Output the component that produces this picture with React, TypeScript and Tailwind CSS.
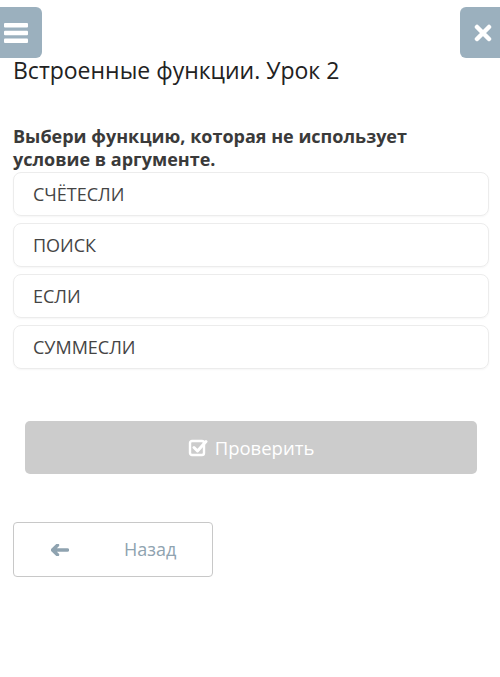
import React from "react";

export default function App() {
  const options = ["СЧЁТЕСЛИ", "ПОИСК", "ЕСЛИ", "СУММЕСЛИ"];
  return (
    <div
      className="w-[500px] h-[677px] bg-white relative overflow-hidden text-[#333]"
      style={{ fontFamily: '"Open Sans", "Noto Sans", sans-serif' }}
    >
      <div className="flex justify-between pt-[7px]">
        <div className="w-[42px] h-[51px] bg-[#9bb0be] rounded-r-[6px] flex items-center pl-[4px]">
          <svg width="24" height="20" viewBox="0 0 24 20">
            <rect x="0" y="0" width="24" height="4.5" rx="1" fill="#fff" />
            <rect x="0" y="7.75" width="24" height="4.5" rx="1" fill="#fff" />
            <rect x="0" y="15.5" width="24" height="4.5" rx="1" fill="#fff" />
          </svg>
        </div>
        <div className="w-[40px] h-[51px] bg-[#9bb0be] rounded-l-[6px] flex items-center justify-center pl-[6px]">
          <svg width="18" height="18" viewBox="0 0 18 18">
            <path d="M3 3 L15 15 M15 3 L3 15" stroke="#fff" strokeWidth="4.5" strokeLinecap="round" />
          </svg>
        </div>
      </div>
      <div className="px-[13px]">
        <div className="text-[23px] leading-[30px] text-[#222] mt-[-3px]">Встроенные функции. Урок 2</div>
        <div className="mt-[40px] text-[18px] leading-[23px] font-bold text-[#3a3a3a]">
          Выбери функцию, которая не использует
          <br />
          условие в аргументе.
        </div>
        <div className="mt-[1px] flex flex-col gap-[7px] w-[476px]">
          {options.map((o) => (
            <div
              key={o}
              className="h-[44px] border border-[#ececec] rounded-[8px] flex items-center pl-[19px] text-[18px] text-[#444] shadow-[0_1px_2px_rgba(0,0,0,0.04)]"
            >
              {o}
            </div>
          ))}
        </div>
        <div className="mt-[52px] ml-[12px] w-[452px] h-[53px] bg-[#cccccc] rounded-[5px] flex items-center justify-center gap-[7px] text-white text-[18.5px]">
          <svg width="20" height="20" viewBox="0 0 20 20">
            <rect x="2" y="3" width="14" height="14" rx="2" fill="none" stroke="#fff" strokeWidth="2.4" />
            <path d="M6 9.5 L9.5 13 L18 3.5" fill="none" stroke="#fff" strokeWidth="3" strokeLinecap="round" strokeLinejoin="round" />
          </svg>
          <span>Проверить</span>
        </div>
        <div className="mt-[48px] w-[200px] h-[55px] border border-[#c8c8c8] rounded-[4px] flex items-center text-[18px] text-[#8fa3b0]">
          <svg width="18" height="12" viewBox="0 0 18 12" className="ml-[37px]">
            <path d="M6.5 1.2 L1.5 6 L6.5 10.8 M2.5 6 H16.5" fill="none" stroke="#8fa3b0" strokeWidth="3.4" strokeLinecap="round" strokeLinejoin="round" />
          </svg>
          <span className="ml-[55px]">Назад</span>
        </div>
      </div>
    </div>
  );
}
